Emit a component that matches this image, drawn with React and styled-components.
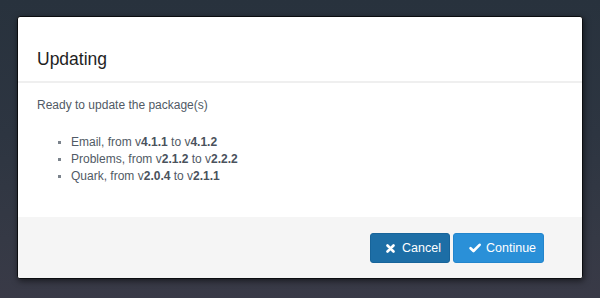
import React from "react";
import styled, { createGlobalStyle } from "styled-components";

const Global = createGlobalStyle`
  html, body { margin: 0; padding: 0; }
  body { font-family: "Liberation Sans", Arial, sans-serif; }
`;

const Backdrop = styled.div`
  width: 600px;
  height: 298px;
  box-sizing: border-box;
  padding: 16px 17px 0 17px;
  background: linear-gradient(180deg, #28323d 0%, #2d3541 45%, #353945 80%, #393a47 100%);
  overflow: hidden;
`;

const Modal = styled.div`
  width: 566px;
  height: 263px;
  box-sizing: border-box;
  background: #fff;
  border: 1px solid #0b0d10;
  border-radius: 3px;
  box-shadow: 1px 2px 6px rgba(0, 0, 0, 0.55);
  display: flex;
  flex-direction: column;
  overflow: hidden;
`;

const Header = styled.div`
  padding: 32px 19px 12px;
  border-bottom: 2px solid #efefef;
`;

const Title = styled.h4`
  margin: 0;
  font-size: 17.5px;
  line-height: 20px;
  font-weight: normal;
  color: #1e1e1e;
`;

const Body = styled.div`
  flex: 1;
  padding: 14px 19px 0;
  font-size: 12px;
  line-height: 17px;
  color: #515a65;
`;

const Intro = styled.p`
  margin: 0 0 20px;
`;

const List = styled.ul`
  margin: 0;
  padding-left: 34px;
  list-style: square;
  li::marker { color: #7b838c; font-size: 10px; }
`;

const Ver = styled.b`
  color: #4a525c;
  font-weight: 700;
`;

const Footer = styled.div`
  height: 61px;
  box-sizing: border-box;
  background: #f5f5f5;
  display: flex;
  justify-content: flex-end;
  align-items: flex-start;
  gap: 3px;
  padding: 16px 38px 0 0;
`;

const Button = styled.button`
  width: ${(p) => p.$w}px;
  height: 30px;
  box-sizing: border-box;
  display: inline-flex;
  align-items: center;
  gap: ${(p) => p.$gap}px;
  padding: 0 0 0 15px;
  border-radius: 3px;
  border: 1px solid ${(p) => p.$border};
  background: ${(p) => p.$bg};
  color: #fff;
  font-family: "Liberation Sans", Arial, sans-serif;
  font-size: 12.5px;
  cursor: pointer;
  svg { display: block; flex: none; }
`;

const TimesIcon = () => (
  <svg width="9" height="9" viewBox="0 0 9 9">
    <path d="M1.5 1.5 L7.5 7.5 M7.5 1.5 L1.5 7.5" stroke="#fff" strokeWidth="2.6" strokeLinecap="round" />
  </svg>
);

const CheckIcon = () => (
  <svg width="12" height="10" viewBox="0 0 12 10">
    <path d="M1.6 5.2 L4.5 8 L10.6 1.8" stroke="#fff" strokeWidth="2.6" fill="none" strokeLinecap="round" strokeLinejoin="round" />
  </svg>
);

const items = [
  ["Email", "4.1.1", "4.1.2"],
  ["Problems", "2.1.2", "2.2.2"],
  ["Quark", "2.0.4", "2.1.1"],
];

export default function App() {
  return (
    <>
      <Global />
      <Backdrop>
        <Modal>
          <Header>
            <Title>Updating</Title>
          </Header>
          <Body>
            <Intro>Ready to update the package(s)</Intro>
            <List>
              {items.map(([name, from, to]) => (
                <li key={name}>
                  {name}, from v<Ver>{from}</Ver> to v<Ver>{to}</Ver>
                </li>
              ))}
            </List>
          </Body>
          <Footer>
            <Button $bg="#1d6ea6" $border="#17649a" $gap={7} $w={80}>
              <TimesIcon /> Cancel
            </Button>
            <Button $bg="#2a90d8" $border="#2385cc" $gap={5} $w={91}>
              <CheckIcon /> Continue
            </Button>
          </Footer>
        </Modal>
      </Backdrop>
    </>
  );
}
